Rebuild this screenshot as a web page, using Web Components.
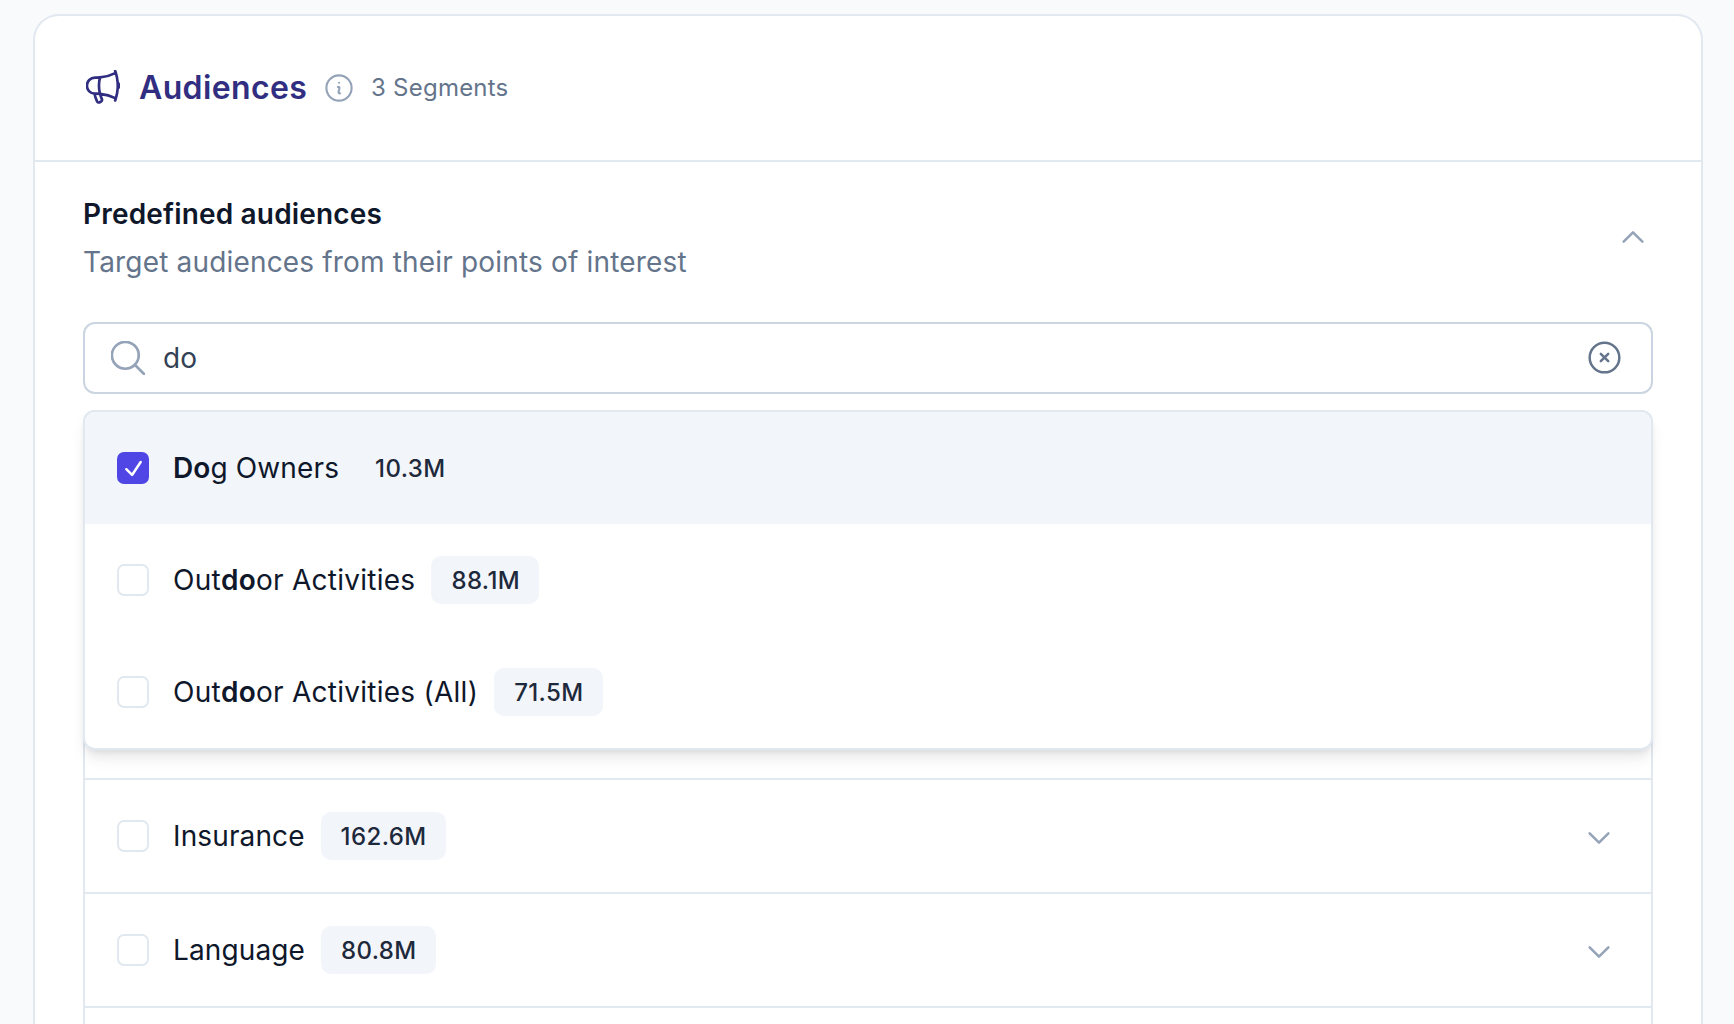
<!DOCTYPE html>
<html>
<head>
<meta charset="utf-8">
<style>
  html, body { margin: 0; height: 1024px; overflow: hidden; }
  body {
    background: #f8fafc;
    font-family: Inter, "Liberation Sans", sans-serif;
    color: #0f172a;
    padding: 14px 31px 0 33px;
    box-sizing: border-box;
  }
</style>
</head>
<body>
  <audience-card>
    <card-header slot="header" title="Audiences" note="3 Segments"></card-header>
    <section-heading title="Predefined audiences" note="Target audiences from their points of interest"></section-heading>
    <search-box value="do"></search-box>
    <audience-results>
      <audience-dropdown slot="overlay">
        <audience-row checked badge="10.3M"><b>Do</b>g Owners</audience-row>
        <audience-row wide badge="88.1M">Out<b>do</b>or Activities</audience-row>
        <audience-row wide badge="71.5M">Out<b>do</b>or Activities (All)</audience-row>
      </audience-dropdown>
      <audience-row divided expandable badge="162.6M">Insurance</audience-row>
      <audience-row divided expandable badge="80.8M">Language</audience-row>
      <audience-row divided></audience-row>
    </audience-results>
  </audience-card>

<script>
const icons = {
  megaphone: 'M10.34 15.84c-.688-.06-1.386-.09-2.09-.09H7.5a4.5 4.5 0 110-9h.75c.704 0 1.402-.03 2.09-.09m0 9.18c.253.962.584 1.892.985 2.783.247.55.06 1.21-.463 1.511l-.657.38c-.551.318-1.26.117-1.527-.461a20.845 20.845 0 01-1.44-4.282m3.102.069a18.03 18.03 0 01-.59-4.59c0-1.586.205-3.124.59-4.59m0 9.18a23.848 23.848 0 018.835 2.535M10.34 6.66a23.83 23.83 0 008.835-2.535m0 0A23.74 23.74 0 0018.795 3m.38 1.125a23.91 23.91 0 011.014 5.395m-1.014 8.855c-.118.38-.245.754-.38 1.125m.38-1.125a23.91 23.91 0 001.014-5.395m0-3.46c.495.413.811 1.035.811 1.73 0 .695-.316 1.317-.811 1.73m0-3.46a24.347 24.347 0 010 3.46',
  info: 'M11.25 11.25l.041-.02a.75.75 0 011.063.852l-.708 2.836a.75.75 0 001.063.853l.041-.021M21 12a9 9 0 11-18 0 9 9 0 0118 0zm-9-3.75h.008v.008H12V8.25z',
  search: 'M21 21l-5.197-5.197m0 0A7.5 7.5 0 105.196 5.196a7.5 7.5 0 0010.607 10.607z',
  clear: 'M9.75 9.75l4.5 4.5m0-4.5l-4.5 4.5M21 12a9 9 0 11-18 0 9 9 0 0118 0z',
  up: 'M4.5 15.75l7.5-7.5 7.5 7.5',
  down: 'M19.5 8.25l-7.5 7.5-7.5-7.5',
  check: 'M4.5 12.75l6 6 9-13.5'
}

const svg = (name, size, box = '0 0 24 24', stroke = 1.5) => `
  <svg width="${size}" height="${size}" viewBox="${box}" fill="none" stroke="currentColor"
    stroke-width="${stroke}" stroke-linecap="round" stroke-linejoin="round"><path d="${icons[name]}"/></svg>`

class Base extends HTMLElement {
  connectedCallback() {
    if (this.shadowRoot) return
    this.attachShadow({ mode: 'open' })
    this.shadowRoot.innerHTML = this.render()
  }
}

class AudienceCard extends Base {
  render() {
    return `
      <style>
        :host {
          display: block;
          background: #fff;
          border: 2px solid #e2e8f0;
          border-bottom: 0;
          border-radius: 26px 26px 0 0;
          height: 1010px;
          box-sizing: border-box;
        }
        .body { padding: 0 48px; }
      </style>
      <slot name="header"></slot>
      <div class="body"><slot></slot></div>
    `
  }
}

class CardHeader extends Base {
  render() {
    return `
      <style>
        :host {
          display: flex;
          align-items: center;
          height: 144px;
          padding-left: 51px;
          border-bottom: 2px solid #e2e8f0;
        }
        .mega { color: #312e81; display: flex; margin-right: 19px; margin-top: -2px; }
        h1 { margin: 0; font-size: 32px; font-weight: 600; color: #312e81; line-height: 40px; letter-spacing: .36px; }
        .info { color: #94a3b8; display: flex; margin: 0 18px; }
        span { font-size: 24px; color: #64748b; line-height: 32px; letter-spacing: .22px; }
      </style>
      <div class="mega">${svg('megaphone', 34, '2.5 2.5 19 19')}</div>
      <h1>${this.getAttribute('title')}</h1>
      <div class="info">${svg('info', 28, '2 2 20 20')}</div>
      <span>${this.getAttribute('note')}</span>
    `
  }
}

class SectionHeading extends Base {
  render() {
    return `
      <style>
        :host {
          display: flex;
          align-items: center;
          justify-content: space-between;
          padding: 32px 5px 40px 0;
          letter-spacing: .17px;
        }
        h2 { margin: 0 0 8px; font-size: 28px; font-weight: 600; line-height: 40px; color: #0f172a; }
        p { margin: 0; font-size: 28px; line-height: 40px; color: #64748b; }
        .toggle { color: #94a3b8; display: flex; margin-top: -3px; }
      </style>
      <div>
        <h2>${this.getAttribute('title')}</h2>
        <p>${this.getAttribute('note')}</p>
      </div>
      <div class="toggle">${svg('up', 30, '0 0 24 24', 2)}</div>
    `
  }
}

class SearchBox extends Base {
  render() {
    return `
      <style>
        :host {
          display: flex;
          align-items: center;
          height: 72px;
          box-sizing: border-box;
          border: 2px solid #cbd5e1;
          border-radius: 12px;
          padding: 0 30px 0 26px;
        }
        .glass { color: #94a3b8; display: flex; margin-right: 18px; }
        .value { flex: 1; font-size: 28px; color: #334155; line-height: 40px; }
        .clear { color: #64748b; display: flex; margin-top: -1px; }
      </style>
      <div class="glass">${svg('search', 34, '2.5 2.5 19 19')}</div>
      <div class="value">${this.getAttribute('value')}</div>
      <div class="clear">${svg('clear', 33, '2 2 20 20')}</div>
    `
  }
}

class AudienceResults extends Base {
  render() {
    return `
      <style>
        :host { display: block; position: relative; margin-top: 16px; }
        /* the open dropdown lies over the first rows of the list */
        .list {
          border: 2px solid #e2e8f0;
          border-bottom: 0;
          border-radius: 12px 12px 0 0;
          padding-top: 366px;
          height: 614px;
          box-sizing: border-box;
          overflow: hidden;
        }
      </style>
      <slot name="overlay"></slot>
      <div class="list"><slot></slot></div>
    `
  }
}

class AudienceDropdown extends Base {
  render() {
    return `
      <style>
        :host {
          display: block;
          position: absolute;
          top: 0;
          left: 0;
          right: 0;
          z-index: 2;
          background: #fff;
          border: 2px solid #e2e8f0;
          border-radius: 12px;
          overflow: hidden;
          box-shadow: 0 10px 15px -3px rgba(15, 23, 42, .1), 0 4px 6px -2px rgba(15, 23, 42, .08);
        }
      </style>
      <slot></slot>
    `
  }
}

class AudienceRow extends Base {
  render() {
    if (!this.hasAttribute('badge')) {
      return `
        <style>
          :host { display: block; height: 112px; border-top: 2px solid #e2e8f0; }
        </style>
      `
    }
    const checked = this.hasAttribute('checked')
    const chevron = this.hasAttribute('expandable')
      ? `<div class="chevron">${svg('down', 30, '0 0 24 24', 2)}</div>` : ''
    return `
      <style>
        :host {
          display: flex;
          align-items: center;
          height: 112px;
          padding: 0 37px 0 32px;
          font-size: 28px;
          letter-spacing: .12px;
          color: #0f172a;
          background: ${checked ? '#f2f5fa' : 'transparent'};
        }
        :host([wide]) { letter-spacing: .26px; }
        :host([divided]) { border-top: 2px solid #e2e8f0; }
        .box {
          width: 32px;
          height: 32px;
          box-sizing: border-box;
          border: 2px solid #e2e8f0;
          border-radius: 7px;
          margin-right: 24px;
          display: flex;
          align-items: center;
          justify-content: center;
          color: #fff;
        }
        .box.on { background: #4f46e5; border-color: #4f46e5; }
        .badge {
          margin-left: 16px;
          height: 48px;
          display: flex;
          align-items: center;
          padding: 0 19px 0 20px;
          border-radius: 10px;
          background: #f2f5fa;
          font-size: 24px;
          font-weight: 500;
          letter-spacing: .4px;
          color: #1e293b;
        }
        ::slotted(b) { font-weight: 600; }
        .chevron { margin-left: auto; color: #94a3b8; display: flex; margin-top: 4px; }
      </style>
      <div class="box ${checked ? 'on' : ''}">${checked ? svg('check', 23, '0 0 24 24', 2.6) : ''}</div>
      <div class="label"><slot></slot></div>
      <div class="badge">${this.getAttribute('badge')}</div>
      ${chevron}
    `
  }
}

window.customElements.define('audience-card', AudienceCard)
window.customElements.define('card-header', CardHeader)
window.customElements.define('section-heading', SectionHeading)
window.customElements.define('search-box', SearchBox)
window.customElements.define('audience-results', AudienceResults)
window.customElements.define('audience-dropdown', AudienceDropdown)
window.customElements.define('audience-row', AudienceRow)
</script>
</body>
</html>
